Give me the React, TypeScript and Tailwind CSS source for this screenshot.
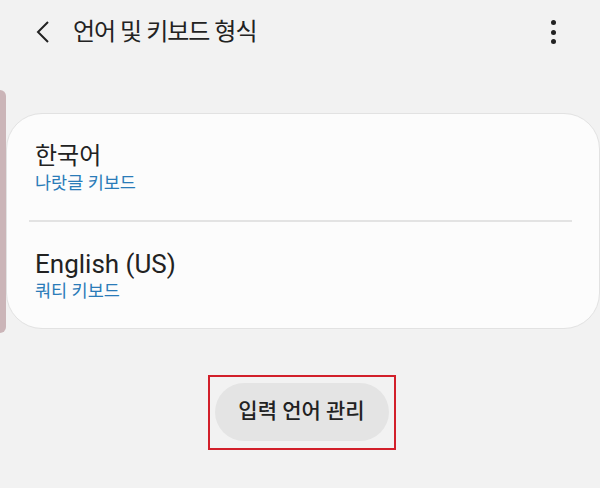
import React from 'react';

const items = [
  { title: '한국어', sub: '나랏글 키보드', size: 'text-[24px]' },
  { title: 'English (US)', sub: '쿼티 키보드', size: 'text-[26px]' },
];

export default function App() {
  return (
    <div
      className="w-[600px] h-[488px] bg-[#f2f2f2] overflow-hidden flex flex-col text-[#222]"
      style={{ fontFamily: "Roboto, 'Noto Sans CJK KR', sans-serif" }}
    >
      {/* header */}
      <div className="h-[64px] flex items-center pl-[34px] pr-[44px]">
        <svg width="18" height="24" viewBox="0 0 18 24" className="shrink-0">
          <path d="M14 2 L4 12 L14 22" fill="none" stroke="#222" strokeWidth="2" />
        </svg>
        <h1 className="ml-[21px] text-[24px] leading-[30px] tracking-[-1px] flex-1">언어 및 키보드 형식</h1>
        <div className="flex flex-col items-center gap-[4.5px]">
          <span className="w-[5px] h-[5px] rounded-full bg-[#222]" />
          <span className="w-[5px] h-[5px] rounded-full bg-[#222]" />
          <span className="w-[5px] h-[5px] rounded-full bg-[#222]" />
        </div>
      </div>

      {/* list */}
      <div className="flex items-start mt-[26px]">
        <div className="w-[6px] h-[243px] bg-[#cbb5b8] rounded-r-[6px] shrink-0" />
        <div className="flex-1 mt-[23px] h-[216px] bg-[#fcfcfc] border border-[#e2e2e2] rounded-[36px] flex flex-col">
          {items.map((item, i) => (
            <React.Fragment key={item.title}>
              {i > 0 && <div className="h-[2px] bg-[#e3e3e3] ml-[22px] mr-[27px]" />}
              <div className="flex-1 flex flex-col justify-center pl-[28px]">
                <div className={`${item.size} leading-[30px]`}>{item.title}</div>
                <div className="text-[17.5px] leading-[22px] mt-[1px] text-[#2a7bb8]">{item.sub}</div>
              </div>
            </React.Fragment>
          ))}
        </div>
      </div>

      {/* manage button */}
      <div className="flex justify-center mt-[42px] pl-[3px]">
        <div className="border-2 border-[#d21f2a] pt-[6px] pb-[7px] px-[5px]">
          <button className="w-[174px] h-[58px] rounded-full bg-[#e4e4e4] text-[21px] font-medium text-[#222]">
            입력 언어 관리
          </button>
        </div>
      </div>
    </div>
  );
}
